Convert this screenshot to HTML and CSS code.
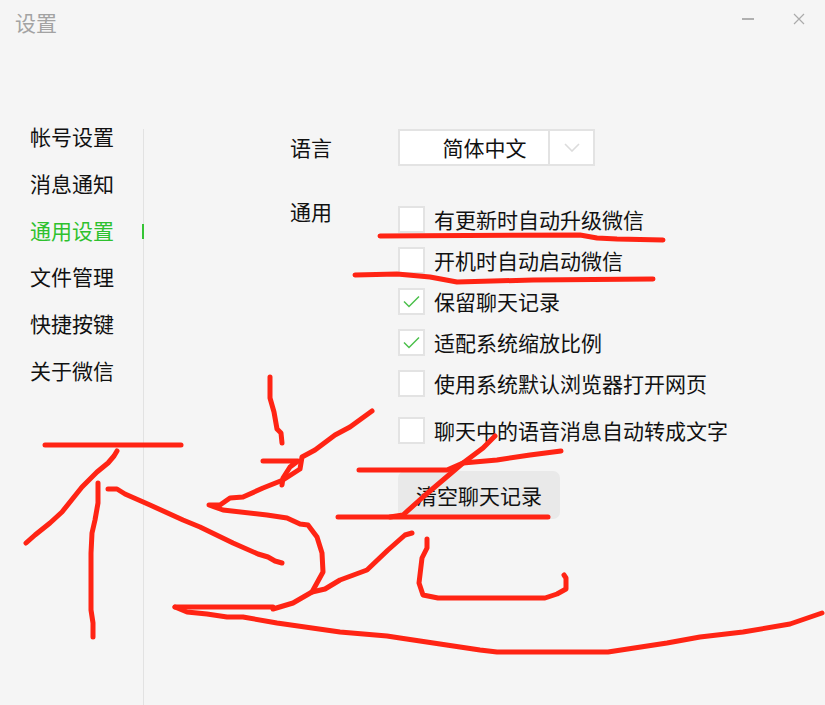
FILE: index.html
```html
<!DOCTYPE html>
<html lang="zh-CN">
<head>
<meta charset="utf-8">
<title>设置</title>
<link rel="stylesheet" href="styles.css">
</head>
<body>
<div class="window">
  <header class="titlebar">
    <span class="title">设置</span>
    <div class="controls">
      <svg class="ctl" width="14" height="12" viewBox="0 0 14 12"><path d="M1 6H13" stroke="#b0b0b0" stroke-width="2"/></svg>
      <svg class="ctl" width="12" height="12" viewBox="0 0 12 12"><path d="M1 1L11 11M11 1L1 11" stroke="#ababab" stroke-width="1.2" fill="none"/></svg>
    </div>
  </header>
  <main class="main">
    <nav class="sidebar">
      <div class="nav-item">帐号设置</div>
      <div class="nav-item">消息通知</div>
      <div class="nav-item active">通用设置<i class="marker"></i></div>
      <div class="nav-item">文件管理</div>
      <div class="nav-item">快捷按键</div>
      <div class="nav-item">关于微信</div>
    </nav>
    <section class="content">
      <div class="row row-lang">
        <div class="label label-lang">语言</div>
        <div class="select">
          <div class="select-value">简体中文</div>
          <div class="select-arrow">
            <svg width="16" height="9" viewBox="0 0 16 9"><path d="M1 1L8 8L15 1" stroke="#dcdcdc" stroke-width="1.6" fill="none"/></svg>
          </div>
        </div>
      </div>
      <div class="row row-general">
        <div class="label label-top">通用</div>
        <div class="options">
          <div class="option"><span class="box"></span>有更新时自动升级微信</div>
          <div class="option"><span class="box"></span>开机时自动启动微信</div>
          <div class="option"><span class="box"><svg width="17" height="13" viewBox="0 0 17 13"><path d="M1 6.5L6 11.5L16 1.5" stroke="#4cc04c" stroke-width="1.5" fill="none"/></svg></span>保留聊天记录</div>
          <div class="option"><span class="box"><svg width="17" height="13" viewBox="0 0 17 13"><path d="M1 6.5L6 11.5L16 1.5" stroke="#4cc04c" stroke-width="1.5" fill="none"/></svg></span>适配系统缩放比例</div>
          <div class="option"><span class="box"></span>使用系统默认浏览器打开网页</div>
          <div class="option option-far"><span class="box"></span>聊天中的语音消息自动转成文字</div>
          <button class="clear-btn" type="button">清空聊天记录</button>
        </div>
      </div>
    </section>
  </main>
  <svg class="scribble" width="825" height="705" viewBox="0 0 825 705">
    <path d="M45 445H181"/>
    <path d="M117 451L114 456L108 463L97 472L82 487L62 512L50 523L35 535L26 543"/>
    <path d="M98 483L98 503L95 520L92 533L91 553L91 610L93 623L93 637"/>
    <path d="M108 489L117 489L125 494L150 505L183 520L200 527L233 543L258 554L268 557L275 561L282 563"/>
    <path d="M270 377L270 398L274 412L277 429L281 433L282 443"/>
    <path d="M263 461H298L290 467L283 478L282 485"/>
    <path d="M372 411L350 427L335 435L315 450L302 457L300 469L283 480L263 488L243 497L230 498L220 505L209 505L223 510L267 515L287 518L300 524L308 525L317 537L322 553L323 572L312 592L293 603L273 609"/>
    <path d="M175 607H273"/>
    <path d="M412 533L405 535L388 550L367 570L340 580L325 589L312 592"/>
    <path d="M175 607L187 612L207 614L227 617L243 617L277 623L340 632L387 636L400 638L440 644L480 650L497 652L608 652L667 643L700 637L743 632L790 624L822 613"/>
    <path d="M427 539L427 548L422 558L419 583L423 595L438 598L545 598L557 594L566 589L566 578L564 575"/>
    <path d="M380 236L580 235L597 238L617 239L663 240"/>
    <path d="M355 275L397 274L430 277L457 282L533 280L653 279"/>
    <path d="M359 470L447 470L463 463L497 460L530 455L561 451"/>
    <path d="M495 436L483 448L463 463L443 480L423 497L403 515L390 517"/>
    <path d="M338 517H548"/>
  </svg>
</div>
</body>
</html>
```
FILE: styles.css
```css
* { box-sizing: border-box; }
html, body { margin: 0; padding: 0; }
body {
  width: 825px;
  height: 705px;
  overflow: hidden;
  background: #f5f5f5;
  font-family: "Noto Sans CJK SC", "Liberation Sans", sans-serif;
  font-size: 21px;
  color: #111;
}
.window {
  position: relative;
  width: 825px;
  height: 705px;
  display: flex;
  flex-direction: column;
}
.titlebar {
  height: 129px;
  flex: none;
  display: flex;
  justify-content: space-between;
  align-items: flex-start;
  padding: 9px 20px 0 15px;
}
.title {
  line-height: 27px;
  color: #a3a3a3;
}
.controls {
  display: flex;
  gap: 38px;
  align-items: center;
  padding-top: 4px;
}
.ctl { display: block; }
.main {
  flex: 1;
  display: flex;
  min-height: 0;
}
.sidebar {
  width: 144px;
  flex: none;
  border-right: 1px solid #e2e2e2;
  padding-left: 30px;
  display: flex;
  flex-direction: column;
  gap: 28.8px;
}
.nav-item {
  height: 18px;
  line-height: 14px;
  display: flex;
  justify-content: space-between;
  align-items: flex-start;
  margin-right: -1px;
}
.nav-item.active { color: #2ec12e; }
.marker {
  width: 2px;
  height: 15px;
  align-self: center;
  background: #35c435;
}
.content {
  flex: 1;
  padding-left: 146px;
}
.row { display: flex; }
.label { width: 108px; flex: none; }
.row-lang { align-items: center; height: 37px; }
.label-lang { padding-bottom: 2px; }
.row-general { margin-top: 40px; }
.label-top { line-height: 11px; }
.select {
  width: 197px;
  height: 37px;
  display: flex;
  background: #fff;
  border: 2px solid #e3e3e3;
}
.select-value {
  flex: 1;
  padding-left: 21px;
  text-align: center;
  line-height: 33px;
  border-right: 2px solid #e3e3e3;
}
.select-arrow {
  width: 43px;
  display: flex;
  align-items: center;
  justify-content: center;
}
.options {
  display: flex;
  flex-direction: column;
  align-items: flex-start;
  gap: 14px;
}
.option {
  height: 27px;
  line-height: 27px;
  display: flex;
  align-items: flex-start;
  gap: 9px;
  white-space: nowrap;
}
.option-far { margin-top: 6px; margin-bottom: 13px; }
.box {
  width: 27px;
  height: 27px;
  flex: none;
  background: #fff;
  border: 2px solid #e3e3e3;
  display: flex;
  align-items: center;
  justify-content: center;
}
.clear-btn {
  width: 162px;
  height: 48px;
  border: none;
  border-radius: 7px;
  background: #e9e9e9;
  color: #111;
  font: inherit;
  line-height: 46px;
  padding: 0;
}
.scribble {
  position: absolute;
  left: 0;
  top: 0;
  pointer-events: none;
}
.scribble path {
  fill: none;
  stroke: #ff2414;
  stroke-width: 5;
  stroke-linecap: round;
  stroke-linejoin: round;
}
```
